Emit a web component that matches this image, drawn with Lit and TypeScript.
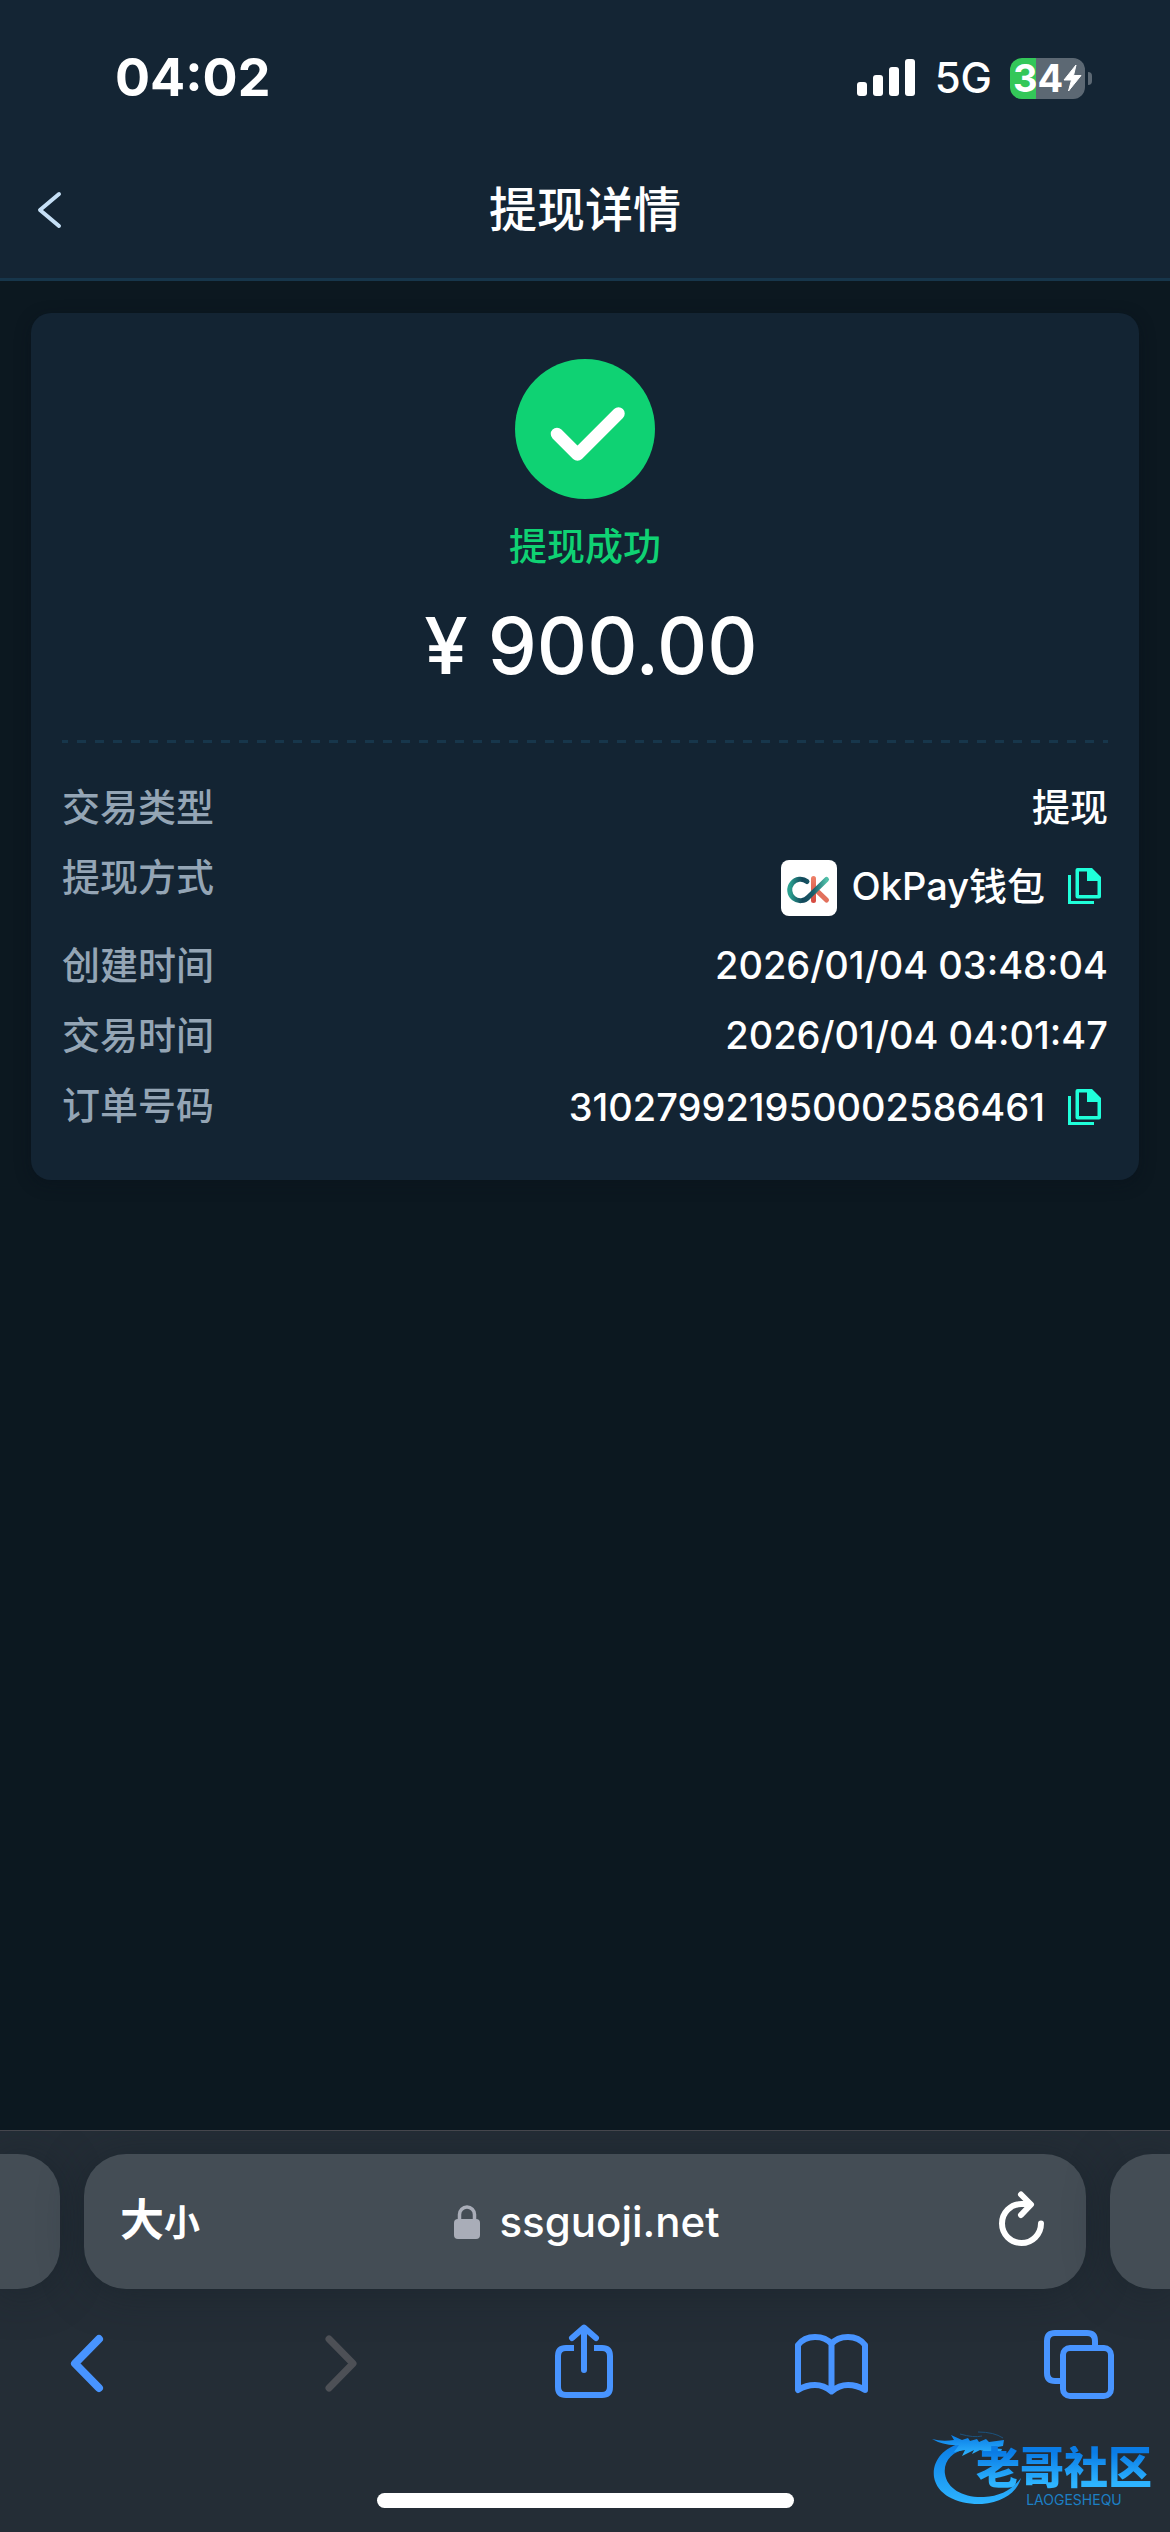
import { LitElement, html, css, svg, nothing, type TemplateResult } from "lit";
import { customElement, property } from "lit/decorators.js";

interface DetailRow {
  label: string;
  value: string;
  wallet?: boolean;
  copyable?: boolean;
}

const rows: DetailRow[] = [
  { label: "交易类型", value: "提现" },
  { label: "提现方式", value: "OkPay钱包", wallet: true, copyable: true },
  { label: "创建时间", value: "2026/01/04 03:48:04" },
  { label: "交易时间", value: "2026/01/04 04:01:47" },
  { label: "订单号码", value: "310279921950002586461", copyable: true },
];

const walletLogo = html`<svg class="wallet" viewBox="0 0 56 56" aria-hidden="true">
  <defs>
    <linearGradient id="teal" x1="0" y1="0" x2="1" y2="0">
      <stop offset="0" stop-color="#2aa08f" />
      <stop offset="0.35" stop-color="#12475a" />
      <stop offset="0.65" stop-color="#1b5f6b" />
      <stop offset="1" stop-color="#4fbfa8" />
    </linearGradient>
    <linearGradient id="coral" x1="0" y1="0" x2="0" y2="1">
      <stop offset="0" stop-color="#ee8168" />
      <stop offset="1" stop-color="#d4483f" />
    </linearGradient>
  </defs>
  <rect width="56" height="56" rx="8" fill="#fff" />
  <g fill="none" stroke-width="5" stroke-linecap="round">
    <path d="M35 30 45.500 40" stroke="#e2705c" />
    <rect x="30" y="16" width="5" height="27" rx="2.500" fill="url(#coral)" />
    <path d="M26 21.500A10.700 10.700 0 1 0 27.500 37L45.500 19.500" stroke="url(#teal)" />
  </g>
</svg>`;

const copyIcon = html`<svg class="copy-icon" viewBox="0 0 33 36" aria-hidden="true">
  <path
    fill="currentColor"
    fill-rule="evenodd"
    d="M9.500 0H24L33 9V28.500Q33 30.500 31 30.500H9.500Q7.500 30.500 7.500 28.500V2Q7.500 0 9.500 0ZM11 3.500V27H29.500V13H19V3.500Z"
  />
  <path fill="none" stroke="currentColor" stroke-width="3" d="M1.500 7V34.500H26" />
</svg>`;

@customElement("status-bar")
export class StatusBar extends LitElement {
  static styles = css`
    :host {
      display: flex;
      justify-content: space-between;
      align-items: center;
      height: 156px;
      padding: 0 78px 0 115px;
      box-sizing: border-box;
      color: #fff;
    }
    .time {
      font-size: 52px;
      font-weight: 700;
      line-height: 60px;
    }
    .right {
      display: flex;
      align-items: center;
    }
    .signal {
      width: 58px;
      height: 38px;
      margin-right: 20px;
    }
    .net {
      font-size: 42px;
      font-weight: 500;
      line-height: 48px;
      margin-right: 18px;
    }
    .battery {
      display: flex;
      align-items: center;
      justify-content: center;
      width: 75px;
      height: 41px;
      border-radius: 12px;
      background: linear-gradient(90deg, #34c759 35%, #5c6873 35%);
      font-size: 38px;
      font-weight: 700;
      line-height: 41px;
    }
    .bolt {
      width: 19px;
      height: 28px;
    }
    .nub {
      width: 4px;
      height: 13px;
      margin-left: 3px;
      border-radius: 0 4px 4px 0;
      background: #5c6873;
    }
  `;

  render() {
    return html`
      <span class="time">04:02</span>
      <span class="right">
        <svg class="signal" viewBox="0 0 58 38" fill="#fff" aria-hidden="true">
          <rect x="0" y="23" width="10" height="14" rx="3" />
          <rect x="16" y="16" width="10" height="21" rx="3" />
          <rect x="32" y="8" width="10" height="29" rx="3" />
          <rect x="48" y="0" width="10" height="37" rx="3" />
        </svg>
        <span class="net">5G</span>
        <span class="battery"
          >34<svg class="bolt" viewBox="0 0 19 28" aria-hidden="true">
            <path
              d="M13 1 1 16H8.500L5.500 27 18 11.500H10.500Z"
              fill="#fff"
              stroke="#fff"
              stroke-linejoin="round"
            /></svg
        ></span>
        <span class="nub"></span>
      </span>
    `;
  }
}

@customElement("detail-card")
export class DetailCard extends LitElement {
  @property({ attribute: false }) rows: DetailRow[] = [];

  static styles = css`
    :host {
      display: block;
      padding: 46px 31px 44px;
      border-radius: 20px;
      background: #132433;
      box-shadow: 0 4px 16px rgba(8, 16, 24, 0.4);
    }
    .summary {
      display: flex;
      flex-direction: column;
      align-items: center;
    }
    .badge {
      width: 140px;
      height: 140px;
    }
    .state {
      margin: 20px 0 0;
      color: #0fd273;
      font-size: 38px;
      font-weight: 500;
      line-height: 54px;
    }
    .amount {
      display: flex;
      gap: 20px;
      margin: 27px 0 0;
      padding-left: 12px;
      color: #fff;
      font-size: 78px;
      font-weight: 500;
      line-height: 92px;
    }
    .rule {
      height: 3px;
      margin: 48px 0 37px;
      background: repeating-linear-gradient(90deg, #17364b 0 6px, transparent 6px 15px, #17364b 15px 18px);
    }
    .rows {
      display: flex;
      flex-direction: column;
      gap: 16px;
      margin: 0;
      font-size: 38px;
      font-weight: 500;
      line-height: 54px;
    }
    .row {
      display: flex;
      justify-content: space-between;
      align-items: flex-start;
    }
    .label {
      color: #94a5b5;
    }
    .value {
      display: flex;
      align-items: center;
      margin: 0;
      color: #fff;
    }
    .value.tall {
      height: 72px;
    }
    .value.with-copy {
      min-height: 58px;
    }
    .wallet {
      width: 56px;
      height: 56px;
      margin: 4px 15px 0 0;
    }
    .copy {
      display: flex;
      padding: 0 7px 0 23px;
      border: 0;
      background: none;
      color: #1fffda;
    }
    .copy-icon {
      width: 33px;
      height: 36px;
    }
  `;

  private renderRow(row: DetailRow): TemplateResult {
    const classes = `value${row.wallet ? " tall" : ""}${row.copyable ? " with-copy" : ""}`;
    return html`<div class="row">
      <dt class="label">${row.label}</dt>
      <dd class=${classes}>
        ${row.wallet ? walletLogo : nothing}<span>${row.value}</span>${row.copyable
          ? html`<button class="copy" type="button" aria-label="复制${row.label}">${copyIcon}</button>`
          : nothing}
      </dd>
    </div>`;
  }

  render() {
    return html`
      <div class="summary">
        <svg class="badge" viewBox="0 0 140 140" aria-hidden="true">
          <circle cx="70" cy="70" r="70" fill="#0fd273" />
          <path
            d="M42 75 62.500 95.500 103.500 54.500"
            fill="none"
            stroke="#fff"
            stroke-width="12.500"
            stroke-linecap="round"
            stroke-linejoin="round"
          />
        </svg>
        <p class="state">提现成功</p>
        <p class="amount"><span>¥</span><span>900.00</span></p>
      </div>
      <div class="rule"></div>
      <dl class="rows">${this.rows.map((row) => this.renderRow(row))}</dl>
    `;
  }
}

const tools = [
  { name: "后退", icon: svg`<path stroke-width="8" d="M52 19 28 43.500 52 68" />` },
  { name: "前进", disabled: true, icon: svg`<path stroke-width="7" d="M33 19 57 43.500 33 68" />` },
  {
    name: "分享",
    icon: svg`<path stroke-linecap="butt" d="M29 28H21Q13 28 13 36V67Q13 75 21 75H57Q65 75 65 67V36Q65 28 57 28H49" /><path d="M39 50V8M27 18 39 7.500 51 18" />`,
  },
  {
    name: "书签",
    icon: svg`<path d="M4 70V25Q10 17 21 17 32 17 37.500 24 43 17 54 17 65 17 71 25V70Q63 65 54 65 45 65 37.500 71.500 30 65 21 65 12 65 4 70ZM37.500 24V71" />`,
  },
  {
    name: "标签页",
    icon: svg`<rect x="20" y="28" width="48" height="48" rx="7" /><path stroke-linecap="butt" d="M20 61H12Q4 61 4 53V21Q4 13 12 13H44Q52 13 52 21V28" />`,
  },
];

@customElement("browser-bar")
export class BrowserBar extends LitElement {
  static styles = css`
    :host {
      display: block;
      position: relative;
      overflow: hidden;
      border-top: 1px solid #45464d;
      background: #242d36;
    }
    .tabs {
      display: flex;
      gap: 24px;
      margin-top: 23px;
    }
    .tab,
    .side {
      height: 135px;
      background: #444d55;
      box-shadow: 0 4px 40px rgba(22, 32, 40, 0.5);
    }
    .side {
      width: 60px;
    }
    .side.left {
      border-radius: 0 42px 42px 0;
    }
    .side.right {
      border-radius: 42px 0 0 42px;
    }
    .tab {
      flex: 1;
      display: grid;
      grid-template-columns: 1fr auto 1fr;
      align-items: center;
      box-sizing: border-box;
      padding: 0 36px;
      border-radius: 42px;
      color: #fff;
    }
    .plain {
      display: flex;
      align-items: center;
      padding: 0;
      border: 0;
      background: none;
      color: inherit;
      font: inherit;
    }
    .size {
      align-items: baseline;
      font-size: 44px;
      font-weight: 700;
      line-height: 54px;
    }
    .small {
      font-size: 36px;
    }
    .url {
      display: flex;
      align-items: center;
      gap: 19px;
      padding-left: 4px;
      color: inherit;
      font-size: 42px;
      font-weight: 500;
      line-height: 54px;
      text-decoration: none;
    }
    .refresh {
      justify-self: end;
    }
    .lock {
      width: 26px;
      height: 34px;
    }
    .reload {
      width: 56px;
      height: 64px;
    }
    .tools {
      display: flex;
      justify-content: space-between;
      padding: 31px 47px 0;
    }
    .tool {
      color: #4894ff;
    }
    .tool:disabled {
      color: #4d5056;
    }
    .tool-icon {
      width: 80px;
      height: 80px;
    }
    .home {
      width: 417px;
      height: 15px;
      margin: 93px auto 24px;
      border-radius: 8px;
      background: #fff;
    }
    .mark {
      position: absolute;
      right: 18px;
      bottom: 24px;
      display: flex;
    }
    .dragon {
      position: absolute;
      left: -44px;
      bottom: 2px;
      width: 92px;
      height: 78px;
    }
    .words {
      display: flex;
      flex-direction: column;
      align-items: center;
      gap: 2px;
    }
    .brand {
      position: relative;
      font-size: 44px;
      font-weight: 900;
      line-height: 44px;
      color: transparent;
      background: linear-gradient(#0a7ce6 15%, #2db4ff 85%);
      background-clip: text;
      -webkit-background-clip: text;
    }
    .latin {
      padding-left: 20px;
      font-size: 14px;
      line-height: 16px;
      color: #1c7fc4;
    }
  `;

  render() {
    return html`
      <div class="tabs">
        <span class="side left"></span>
        <div class="tab">
          <button class="plain size" type="button"><span>大</span><span class="small">小</span></button>
          <a class="url" href="https://ssguoji.net">
            <svg class="lock" viewBox="0 0 26 34" aria-hidden="true">
              <rect y="14" width="26" height="20" rx="4" fill="#a9adb8" />
              <path d="M5.500 16V9.500a7.500 7.500 0 0 1 15 0V16" fill="none" stroke="#a9adb8" stroke-width="3.500" />
            </svg>
            <span>ssguoji.net</span>
          </a>
          <button class="plain refresh" type="button" aria-label="刷新">
            <svg
              class="reload"
              viewBox="0 0 56 64"
              fill="none"
              stroke="#fff"
              stroke-width="6"
              stroke-linecap="round"
              stroke-linejoin="round"
            >
              <path d="M47 33.500A19.500 19.500 0 1 1 27.500 14H36M27 4.500 37 14.500 27 25" />
            </svg>
          </button>
        </div>
        <span class="side right"></span>
      </div>
      <nav class="tools">
        ${tools.map(
          (tool) => html`<button class="plain tool" type="button" aria-label=${tool.name} ?disabled=${tool.disabled}>
            <svg
              class="tool-icon"
              viewBox="0 0 80 80"
              fill="none"
              stroke="currentColor"
              stroke-width="6"
              stroke-linecap="round"
              stroke-linejoin="round"
            >
              ${tool.icon}
            </svg>
          </button>`
        )}
      </nav>
      <div class="home"></div>
      <div class="mark">
        <svg class="dragon" viewBox="0 0 92 78" aria-hidden="true">
          <defs>
            <linearGradient id="body" x1="0" y1="0" x2="0" y2="1">
              <stop offset="0" stop-color="#0a7ce6" />
              <stop offset="1" stop-color="#2db4ff" />
            </linearGradient>
          </defs>
          <g fill="url(#body)">
            <path
              d="M30 15C10 20 0 34 2 49 5 67 26 77 50 76 70 74 85 65 89 50 80 62 68 68 52 69 32 70 15 61 13 46 11 34 20 23 35 21Z"
            />
            <path
              d="M0 11Q10 14 22 12L19 7 30 12 36 10 38 13 45 11 47 14 54 11 57 14 72 12 71 18 60 20 70 21 68 26 55 24 48 22 40 26 42 22 30 28 33 22 22 24 27 17Q12 18 0 11Z"
            />
          </g>
          <path d="M28 6Q42 10 50 8M46 4Q62 4 71 10" fill="none" stroke="#1b527d" />
        </svg>
        <div class="words">
          <span class="brand">老哥社区</span>
          <span class="latin">LAOGESHEQU</span>
        </div>
      </div>
    `;
  }
}

@customElement("app-root")
export class AppRoot extends LitElement {
  static styles = css`
    :host {
      display: flex;
      flex-direction: column;
      min-height: 100vh;
      background: #0c1820;
      font-family: Inter, "Noto Sans CJK SC", sans-serif;
    }
    .top {
      border-bottom: 3px solid #17364b;
      background: #142534;
    }
    .nav {
      display: grid;
      grid-template-columns: 100px 1fr 100px;
      align-items: center;
      height: 122px;
      padding-bottom: 14px;
      box-sizing: border-box;
    }
    .back {
      display: flex;
      padding: 0 0 0 37px;
      border: 0;
      background: none;
    }
    .back-icon {
      width: 26px;
      height: 38px;
    }
    .title {
      margin: 0;
      color: #fff;
      font-size: 48px;
      font-weight: 500;
      line-height: 68px;
      text-align: center;
    }
    .main {
      flex: 1;
      padding: 32px 31px;
    }
  `;

  render() {
    return html`
      <header class="top">
        <status-bar></status-bar>
        <div class="nav">
          <button class="back" type="button" aria-label="返回">
            <svg
              class="back-icon"
              viewBox="0 0 26 38"
              fill="none"
              stroke="#c5dff5"
              stroke-width="4"
              stroke-linecap="round"
              stroke-linejoin="round"
            >
              <path d="M22 3 3 19 22 35" />
            </svg>
          </button>
          <h1 class="title">提现详情</h1>
        </div>
      </header>
      <main class="main"><detail-card .rows=${rows}></detail-card></main>
      <browser-bar></browser-bar>
    `;
  }
}
